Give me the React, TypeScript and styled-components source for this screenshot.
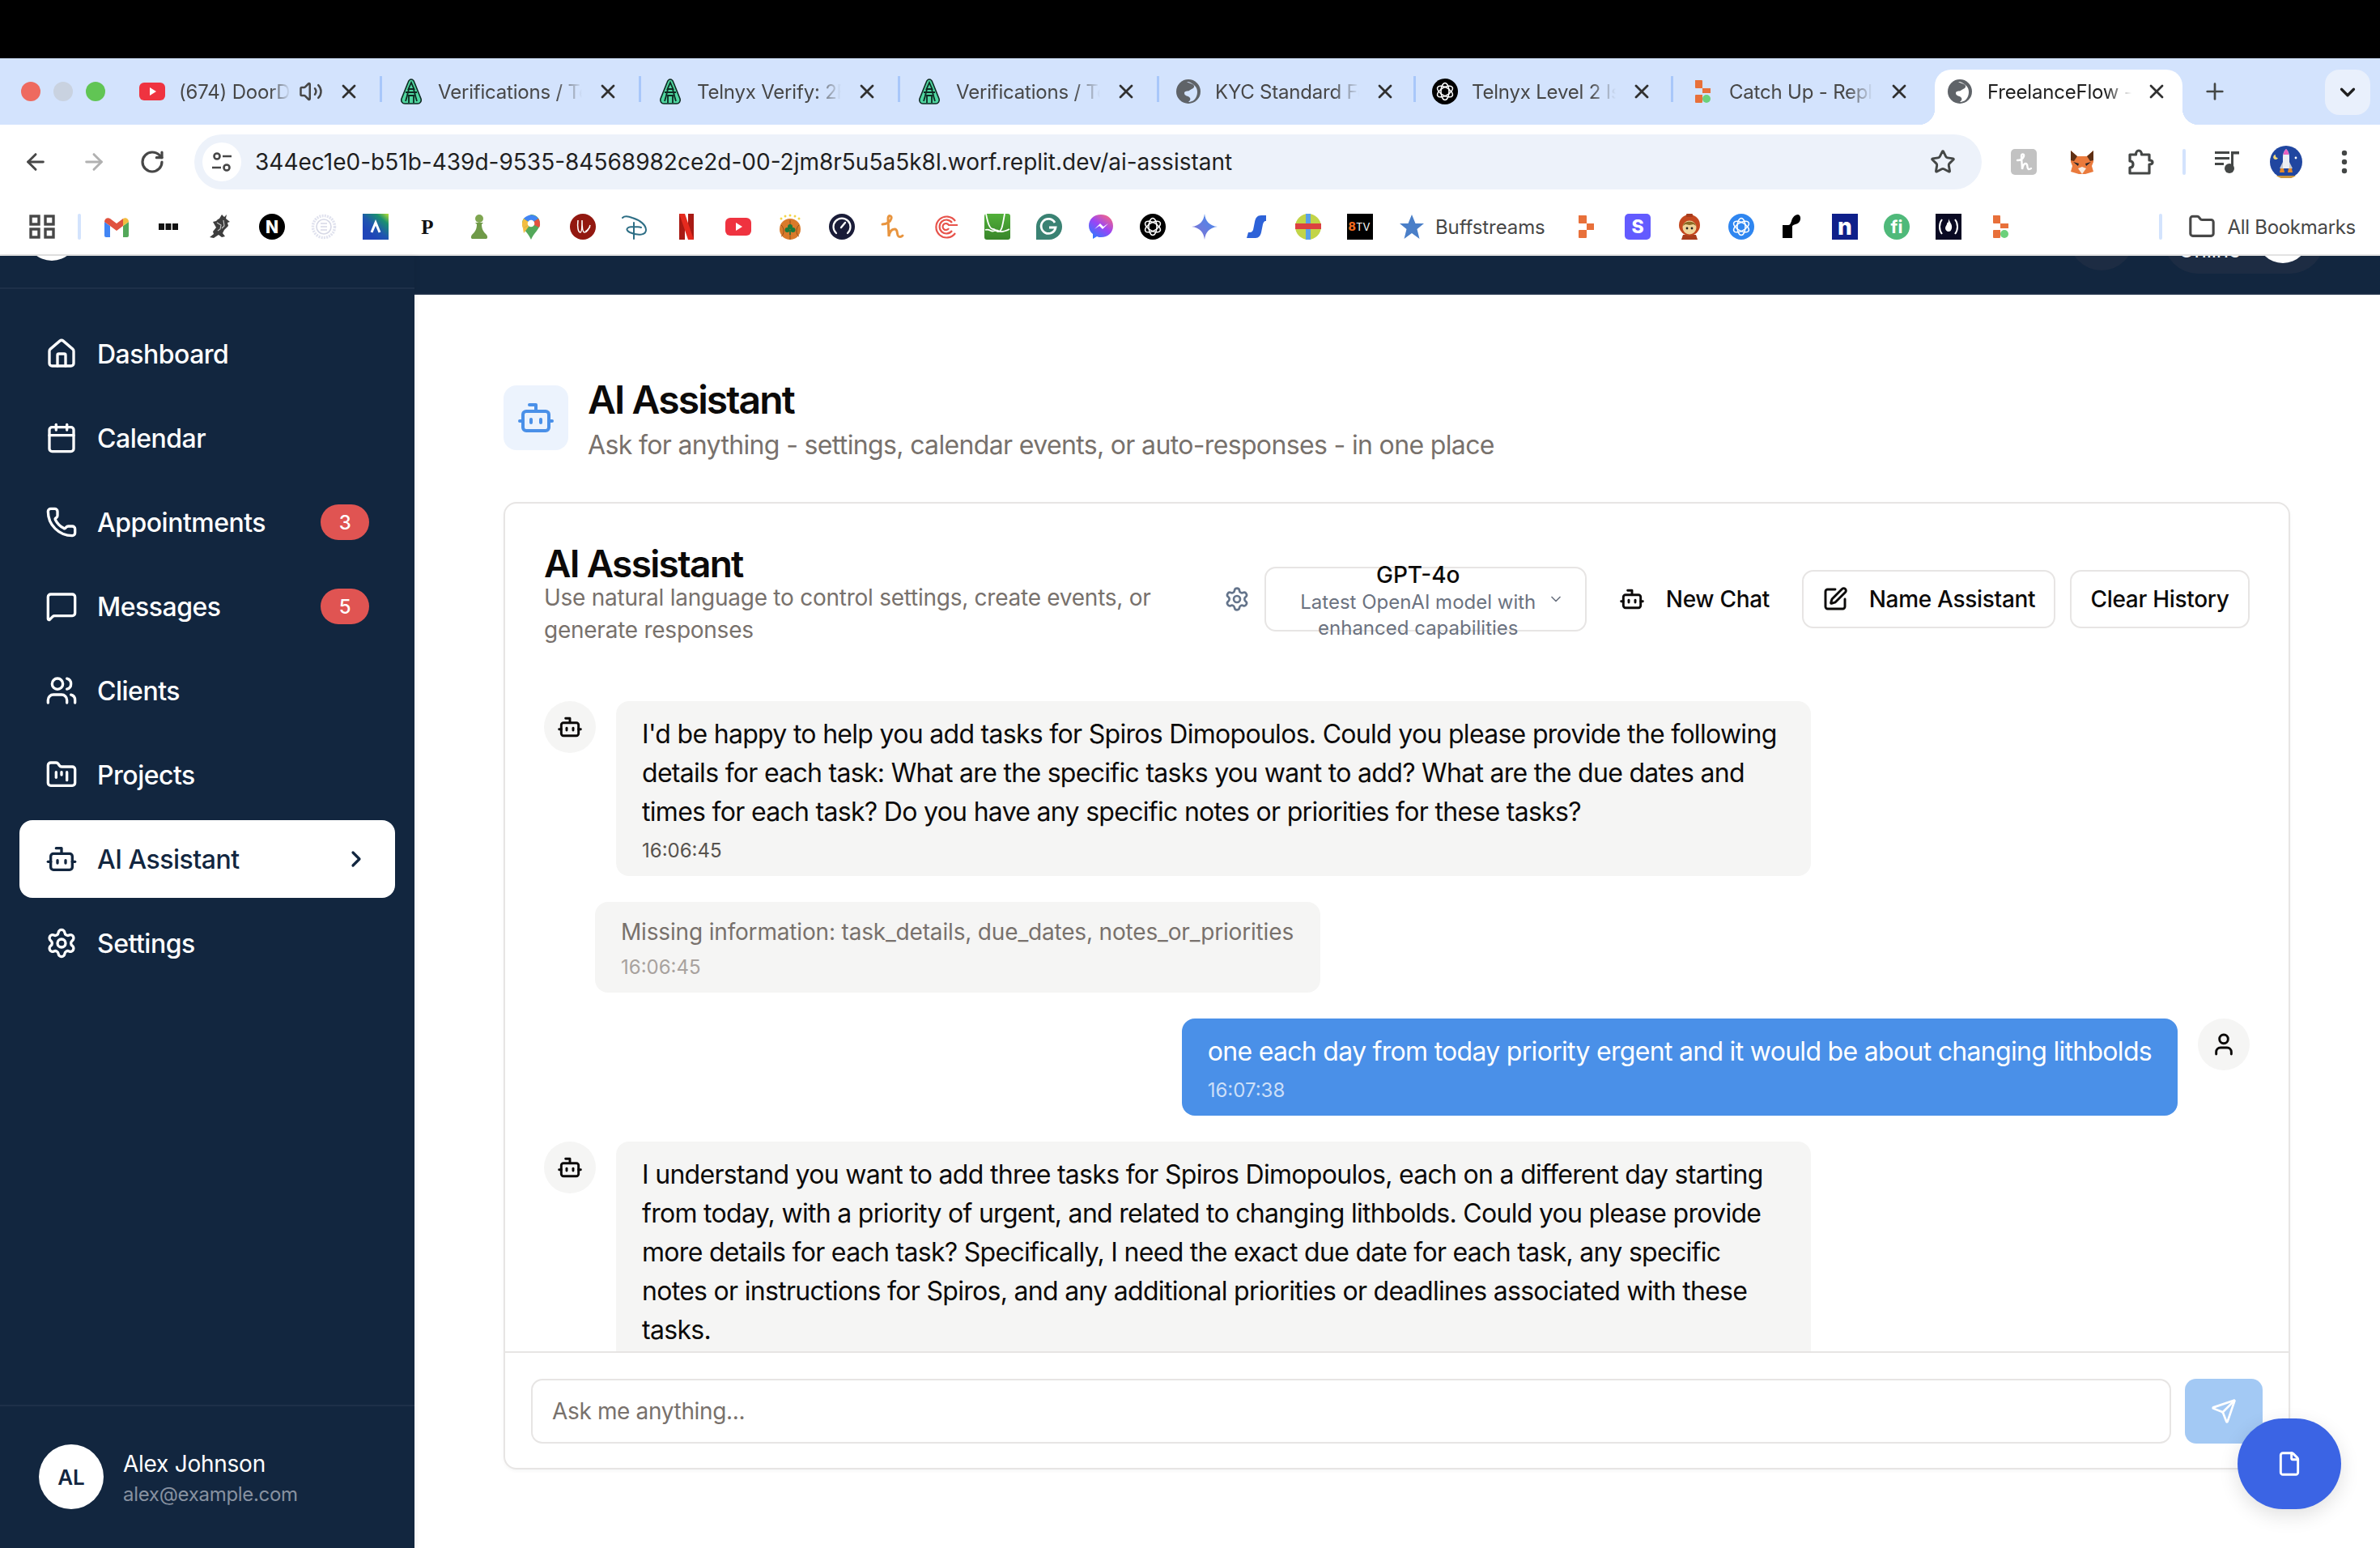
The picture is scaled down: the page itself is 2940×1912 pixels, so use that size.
import React from "react";
import styled, { createGlobalStyle } from "styled-components";
import {
  House, Calendar, Phone, MessageSquare, Users, FolderKanban, Bot, ChevronRight, Settings,
  SquarePen, Send, File, User, Star, ArrowLeft, ArrowRight, RotateCw, Plus, X,
  ChevronDown, Volume2, Folder,
} from "lucide-react";

const Global = createGlobalStyle`
  html, body { margin: 0; padding: 0; background: #fff; }
  body { font-family: Inter, "Liberation Sans", sans-serif; }
  * { box-sizing: border-box; }
`;

const Page = styled.div`
  width: 2940px; height: 1912px; display: flex; flex-direction: column; overflow: hidden; background: #fff; position: relative;
`;
const BlackBar = styled.div`height: 72px; background: #000; flex: none;`;
const TabStrip = styled.div`height: 82px; flex: none; background: #d3e3fd; display: flex; align-items: flex-start; padding-top: 14px;`;
const Lights = styled.div`width: 150px; height: 54px; flex: none; display: flex; align-items: center; gap: 16px; padding-left: 26px;`;
const Light = styled.span<{ $c: string }>`width: 24px; height: 24px; border-radius: 50%; background: ${p => p.$c};`;
const Tab = styled.div<{ $w: number; $active?: boolean; $sep?: boolean }>`
  width: ${p => p.$w}px; height: ${p => (p.$active ? 68 : 54)}px; flex: none; position: relative;
  display: flex; align-items: flex-start; padding: ${p => (p.$active ? "0 0 0 15px" : "0 0 0 22px")};
  background: ${p => (p.$active ? "#fff" : "transparent")};
  border-radius: ${p => (p.$active ? "20px 20px 0 0" : "0")};
  color: ${p => (p.$active ? "#1f1f1f" : "#474747")};
  ${p => p.$sep && `&::after { content: ""; position: absolute; right: -2px; top: 8px; width: 3px; height: 32px; background: #a8c7fa; }`}
  ${p => p.$active && `
    &::before, & > i { content: ""; position: absolute; bottom: 0; width: 20px; height: 20px; }
    &::before { left: -20px; background: radial-gradient(circle at 0 0, #d3e3fd 20px, #fff 20.5px); }
    & > i { right: -20px; background: radial-gradient(circle at 100% 0, #d3e3fd 20px, #fff 20.5px); }
  `}
`;
const TabRow = styled.div`height: 54px; width: 100%; display: flex; align-items: center; position: relative;`;
const TabIcon = styled.span<{ $active?: boolean }>`width: 32px; height: 32px; flex: none; margin-right: ${p => (p.$active ? 18 : 17)}px; display: flex;`;
const TabTitle = styled.span<{ $w: number }>`
  font-size: 24px; letter-spacing: -0.2px; width: ${p => p.$w}px; white-space: nowrap; overflow: hidden; flex: none;
  -webkit-mask-image: linear-gradient(90deg, #000 82%, transparent 100%); mask-image: linear-gradient(90deg, #000 82%, transparent 100%);
`;
const TabClose = styled.span<{ $l: number }>`position: absolute; left: ${p => p.$l}px; top: 13px; display: flex; color: #303030;`;
const Speaker = styled.span`position: absolute; left: 197px; top: 12px; display: flex; color: #474747;`;
const NewTab = styled.span`width: 80px; height: 54px; flex: none; display: flex; align-items: center; justify-content: center; color: #444746;`;
const TabMenu = styled.span`width: 56px; height: 56px; border-radius: 18px; background: #e9f0fc; margin-left: 96px; flex: none; display: flex; align-items: center; justify-content: center; color: #1f1f1f;`;

const Toolbar = styled.div`height: 94px; flex: none; background: #fff; border-radius: 16px 16px 0 0; display: flex; align-items: flex-start; padding-top: 12px; color: #474747;`;
const NavBtns = styled.div`width: 240px; height: 68px; flex: none; display: flex; align-items: center; padding-left: 28px; gap: 40px;`;
const Omni = styled.div`width: 2208px; height: 68px; flex: none; border-radius: 34px; background: #edf2fa; display: flex; align-items: center; padding-left: 10px; position: relative;`;
const TuneBtn = styled.span`width: 48px; height: 48px; border-radius: 50%; background: #fff; display: flex; align-items: center; justify-content: center; margin-right: 17px;`;
const Url = styled.span`font-size: 28px; color: #1f1f1f; white-space: nowrap;`;
const StarBtn = styled.span`position: absolute; right: 32px; top: 18px; display: flex; color: #444746;`;
const ExtIcons = styled.div`flex: 1; height: 68px; display: flex; align-items: center; padding-left: 16px;`;
const ExtSlot = styled.span<{ $w: number }>`width: ${p => p.$w}px; flex: none; display: flex; justify-content: center; color: #444746;`;
const VSep = styled.span`width: 4px; height: 32px; border-radius: 2px; background: #d3e3fd; flex: none;`;
const ExtSep = styled(VSep)`margin-left: 16px;`;

const Bookmarks = styled.div`height: 66px; flex: none; background: #fff; display: flex; align-items: center; padding: 0 30px 2px 20px; position: relative;`;
const BmSlot = styled.span`width: 64px; height: 32px; flex: none; display: flex; justify-content: center;`;
const BmText = styled.span`font-size: 24px; letter-spacing: -0.3px; color: #474747; white-space: nowrap;`;
const BuffText = styled(BmText)`margin: 0 18px 0 -3px; letter-spacing: -0.1px;`;
const BmSep = styled(VSep)`margin: 0 12px;`;
const BmRight = styled.div`margin-left: auto; display: flex; align-items: center; color: #474747;`;
const FolderSlot = styled.span`display: flex; margin: 0 15px 0 32px;`;
const ChromeLine = styled.div`height: 2px; flex: none; background: #e3e3e3;`;

const Body = styled.div`flex: 1; display: flex; min-height: 0;`;
const Sidebar = styled.aside`width: 512px; flex: none; background: #12263f; display: flex; flex-direction: column; color: #fff; box-shadow: 2px 0 6px rgba(0,0,0,.06); position: relative; z-index: 1;`;
const SideTop = styled.div`height: 41px; flex: none; border-bottom: 2px solid #1e3049; overflow: hidden; padding-left: 32px;`;
const LogoCircle = styled.div`width: 64px; height: 64px; border-radius: 50%; background: #fff; margin-top: -58px;`;
const Nav = styled.nav`flex: 1; padding: 32px 24px 0; display: flex; flex-direction: column; gap: 8px;`;
const NavItem = styled.div<{ $active?: boolean }>`
  height: 96px; border-radius: 16px; display: flex; align-items: center; padding: 0 32px 0 32px; gap: 24px;
  font-size: 32px; font-weight: 500; letter-spacing: -0.5px; background: ${p => (p.$active ? "#fff" : "transparent")}; color: ${p => (p.$active ? "#12263f" : "#fff")};
`;
const NavLabel = styled.span`flex: 1;`;
const Badge = styled.span`width: 60px; height: 44px; border-radius: 22px; background: #e05452; color: #fff; font-size: 24px; font-weight: 500; display: flex; align-items: center; justify-content: center;`;
const UserBlock = styled.div`height: 177px; flex: none; border-top: 2px solid #1e3049; display: flex; align-items: flex-start; padding: 47px 48px 0; gap: 24px;`;
const UserAvatar = styled.div`width: 80px; height: 80px; border-radius: 50%; background: #fff; color: #12263f; font-size: 26px; font-weight: 600; display: flex; align-items: center; justify-content: center;`;
const UserText = styled.div`display: flex; flex-direction: column; padding-top: 4px;`;
const UserName = styled.div`font-size: 28px; font-weight: 400; letter-spacing: -0.25px; line-height: 40px; color: #fff;`;
const UserMail = styled.div`font-size: 24px; letter-spacing: -0.3px; line-height: 36px; color: #8791a0;`;

const Main = styled.main`flex: 1; min-width: 0; display: flex; flex-direction: column;`;
const TopHeader = styled.header`height: 48px; flex: none; background: #12263f; border-bottom: 2px solid #1c2e47; overflow: hidden; display: flex; justify-content: flex-end; padding-right: 69px; gap: 37px; align-items: flex-start;`;
const HeaderCircle = styled.div`width: 80px; height: 80px; border-radius: 50%; background: #1d2c43; margin-top: -62px;`;
const StatusPill = styled.div`width: 198px; height: 84px; border-radius: 42px; background: #1d2c43; margin-top: -62px; display: flex; align-items: center; padding-left: 18px; color: #fff; font-size: 26px; letter-spacing: -0.3px; position: relative;`;
const StatusText = styled.span`margin-top: 24px;`;
const StatusDot = styled.span`width: 64px; height: 64px; border-radius: 50%; background: #fff; position: absolute; left: 115px; top: 7px;`;

const Content = styled.div`flex: 1; padding: 112px 111px 0 110px; min-height: 0; display: flex; flex-direction: column;`;
const PageHead = styled.div`display: flex; gap: 24px; height: 80px; margin-bottom: 64px;`;
const IconBox = styled.div`width: 80px; height: 80px; border-radius: 16px; background: #ecf3fd; color: #4a90e8; display: flex; align-items: center; justify-content: center; flex: none;`;
const PageTitle = styled.h1`margin: -10px 0 0; font-size: 48px; line-height: 56px; font-weight: 600; letter-spacing: -1.9px; color: #0c0a09;`;
const PageSub = styled.p`margin: 8px 0 0; font-size: 32px; line-height: 40px; letter-spacing: -0.65px; color: #78716c;`;

const Card = styled.section`height: 1195px; flex: none; border: 2px solid #e7e5e4; border-radius: 16px; background: #fff; display: flex; flex-direction: column; box-shadow: 0 2px 4px rgba(0,0,0,.04);`;
const CardHeader = styled.div`height: 244px; flex: none; padding: 48px 48px 0 48px; display: flex; align-items: flex-start;`;
const TitleBlock = styled.div`width: 780px; flex: none;`;
const CardTitle = styled.h2`margin: 2px 0 -2px; font-size: 46px; line-height: 48px; font-weight: 600; letter-spacing: -1.7px; color: #0c0a09;`;
const CardDesc = styled.p`margin: 0; font-size: 28px; line-height: 40px; letter-spacing: -0.25px; color: #78716c;`;
const Controls = styled.div`flex: 1; margin-top: 30px; display: flex; align-items: center; justify-content: flex-end;`;
const GearBtn = styled.span`display: flex; color: #64748b; margin-right: 18px;`;
const ModelSelect = styled.div`width: 398px; height: 80px; border: 2px solid #e7e5e4; border-radius: 14px; display: flex; align-items: center; position: relative; flex: none;`;
const ModelText = styled.div`width: 376px; text-align: center; margin-top: 4px;`;
const ModelName = styled.div`font-size: 28px; line-height: 36px; font-weight: 500; color: #0c0a09;`;
const ModelSub = styled.div`padding: 0 20px; font-size: 24px; line-height: 32px; color: #6b7280;`;
const ModelChevron = styled.span`display: flex; color: #6b7280; position: absolute; right: 26px; top: 28px;`;
const GhostBtn = styled.div`height: 72px; margin-left: 16px; padding: 0 24px; display: flex; align-items: center; gap: 26px; font-size: 28px; font-weight: 500; letter-spacing: -0.3px; color: #0c0a09; flex: none;`;
const OutlineBtn = styled(GhostBtn)<{ $w: number }>`width: ${p => p.$w}px; justify-content: center; border: 2px solid #e7e5e4; border-radius: 14px; margin-left: 18px; padding: 0;`;
const NameBtn = styled(OutlineBtn)`margin-left: 16px;`;

const Messages = styled.div`flex: 1; min-height: 0; overflow: hidden; padding: 0 48px; display: flex; flex-direction: column; gap: 32px;`;
const MsgRow = styled.div<{ $user?: boolean }>`display: flex; gap: 25px; flex: none; justify-content: ${p => (p.$user ? "flex-end" : "flex-start")};`;
const AvatarDot = styled.div`width: 64px; height: 64px; border-radius: 50%; background: #f5f5f4; color: #0c0a09; display: flex; align-items: center; justify-content: center; flex: none;`;
const Bubble = styled.div<{ $user?: boolean }>`
  max-width: 1476px; padding: 17px 32px 13px; border-radius: 16px; font-size: 32px; line-height: 48px; letter-spacing: -0.7px;
  background: ${p => (p.$user ? "#4a90e8" : "#f5f5f4")}; color: ${p => (p.$user ? "#fff" : "#0c0a09")};
`;
const Stamp = styled.div<{ $light?: boolean; $muted?: boolean }>`margin-top: 6px; font-size: 24px; line-height: 36px; letter-spacing: 0; color: ${p => (p.$light ? "rgba(255,255,255,.72)" : p.$muted ? "#a8a29e" : "#57534e")};`;
const NoteBubble = styled.div`margin-left: 63px; width: 896px; padding: 17px 32px 13px; border-radius: 16px; background: #f5f5f4; font-size: 28px; line-height: 40px; letter-spacing: -0.17px; white-space: nowrap; color: #78716c; flex: none;`;

const InputBar = styled.div`height: 144px; flex: none; border-top: 2px solid #e7e5e4; padding: 32px 32px 0; display: flex; gap: 17px;`;
const ChatInput = styled.div`flex: 1; height: 80px; border: 2px solid #e7e5e4; border-radius: 14px; padding: 0 24px; display: flex; align-items: center; font-size: 28px; letter-spacing: -0.35px; color: #78716c;`;
const SendBtn = styled.div`width: 96px; height: 80px; border-radius: 14px; background: #a3c9f4; color: #fff; display: flex; align-items: center; justify-content: center; flex: none;`;
const Fab = styled.div`position: absolute; left: 2764px; top: 1752px; width: 128px; height: 112px; border-radius: 56px; background: #3b64e4; color: #fff; display: flex; align-items: center; justify-content: center; box-shadow: 0 8px 24px rgba(0,0,0,.12);`;

const Fav = styled.svg`width: 32px; height: 32px; display: block; flex: none;`;
const G = { sans: "Inter, sans-serif", serif: "Liberation Serif, serif" };

const Flower: React.FC<{ bg: string }> = ({ bg }) => (
  <Fav viewBox="0 0 32 32">
    <circle cx="16" cy="16" r="16" fill={bg} />
    <g fill="none" stroke="#fff" strokeWidth="1.5">
      <ellipse cx="16" cy="16" rx="5" ry="10.5" />
      <ellipse cx="16" cy="16" rx="5" ry="10.5" transform="rotate(60 16 16)" />
      <ellipse cx="16" cy="16" rx="5" ry="10.5" transform="rotate(120 16 16)" />
    </g>
  </Fav>
);
const Telnyx = () => (
  <Fav viewBox="0 0 32 32">
    <path d="M16 1c2 0 3 1 4 4l8 20c1 3-1 6-4 6H8c-3 0-5-3-4-6l8-20c1-3 2-4 4-4z" fill="#4fd6a0" stroke="#0e2a22" strokeWidth="1.6" />
    <path d="M16 5l-3.500 8h7zM9 17h14M9 28c2-6 3-11 4-15M23 28c-2-6-3-11-4-15M13 30V21h6v9" fill="none" stroke="#0e2a22" strokeWidth="1.800" />
  </Fav>
);

const FavIcon: React.FC<{ k: string }> = ({ k }) => {
  switch (k) {
    case "yt": return <Fav viewBox="0 0 32 32"><rect x="0" y="5" width="32" height="22" rx="6" fill="#ef3340" /><path d="M13 11l8 5-8 5z" fill="#fff" /></Fav>;
    case "telnyx": return <Telnyx />;
    case "globe": return <Fav viewBox="0 0 32 32"><circle cx="16" cy="16" r="15" fill="#5f6368" /><path d="M14 4c3 2 8 2 9 5 1 3-4 4-6 6-2 1-6 0-6 3 0 4 5 3 7 6 1 2 0 3-2 5 4 0 8-2 10-7 2-5 1-10-2-13-3-3-6-5-10-5z" fill="#d3e3fd" /></Fav>;
    case "globeW": return <Fav viewBox="0 0 32 32"><circle cx="16" cy="16" r="15" fill="#5f6368" /><path d="M14 4c3 2 8 2 9 5 1 3-4 4-6 6-2 1-6 0-6 3 0 4 5 3 7 6 1 2 0 3-2 5 4 0 8-2 10-7 2-5 1-10-2-13-3-3-6-5-10-5z" fill="#fff" /></Fav>;
    case "openai": return <Flower bg="#000" />;
    case "openaiB": return <Flower bg="#2f86f0" />;
    case "replit": return <Fav viewBox="0 0 32 32"><path d="M7 2h9a1 1 0 011 1v9H8a1 1 0 01-1-1zM17 12h9v8h-9zM7 21a1 1 0 011-1h9v9a1 1 0 01-1 1H8a1 1 0 01-1-1z" fill="#e8703a" /></Fav>;
    case "replitG": return <Fav viewBox="0 0 32 32"><path d="M7 2h8a1 1 0 011 1v9H8a1 1 0 01-1-1zM16 12h10v6H16zM7 21a1 1 0 011-1h8v9a1 1 0 01-1 1H8a1 1 0 01-1-1z" fill="#e8703a" /><circle cx="21" cy="25" r="5" fill="#6cd07b" /></Fav>;
    case "gmail": return <Fav viewBox="0 0 32 32"><path d="M1 10v17a2 2 0 002 2h5V15z" fill="#4285f4" /><path d="M31 10v17a2 2 0 01-2 2h-5V15z" fill="#53a85a" /><path d="M1 10c0-4 4-6 7-4l8 6 8-6v9l-8 6-8-6-7-5z" fill="#e0523f" /><path d="M24 6c3-2 7 0 7 4l-7 5z" fill="#f3bd40" /></Fav>;
    case "dots": return <Fav viewBox="0 0 32 32"><path d="M4 12h7v8H4zM12.500 12h7v8h-7zM21 12h7v8h-7z" fill="#111" /></Fav>;
    case "griffin": return <Fav viewBox="0 0 32 32"><path d="M18 1l3 3 3-3-1 5 5 4-3 1 1 4-5 5-2 4 3 4-4 1-4-3-6 4-5-1 5-4-1-3 4-5-4-7 4-1 2-2 2-1z" fill="#3d3d3d" /><path d="M12 11l5 3-1 5-3 2M20 8l1 7-3 3" fill="none" stroke="#c5c5c5" strokeWidth="1.200" /></Fav>;
    case "n": return <Fav viewBox="0 0 32 32"><circle cx="16" cy="16" r="16" fill="#000" /><text x="16" y="23.500" textAnchor="middle" fill="#fff" fontSize="21" fontWeight="800" fontFamily={G.sans}>N</text></Fav>;
    case "pale": return <Fav viewBox="0 0 32 32"><circle cx="16" cy="16" r="13.500" fill="#fff" stroke="#e0e2ee" strokeWidth="3.500" strokeDasharray="2 1.200" /><circle cx="16" cy="16" r="9" fill="none" stroke="#d6d8e6" strokeWidth="1.600" /><path d="M12 12h8M12 16h8M12 20h8" stroke="#d6d8e6" strokeWidth="1.400" /></Fav>;
    case "lambda": return <Fav viewBox="0 0 32 32"><defs><linearGradient id="lg1" x1="1" y1="0" x2="0.300" y2="0.800"><stop offset="0" stopColor="#b8e030" /><stop offset=".3" stopColor="#1a9070" /><stop offset=".7" stopColor="#1f55b0" /><stop offset="1" stopColor="#1f45b8" /></linearGradient></defs><rect width="32" height="32" fill="url(#lg1)" /><path d="M11 23l5-12 5 12" fill="none" stroke="#fff" strokeWidth="3" /></Fav>;
    case "p": return <Fav viewBox="0 0 32 32"><text x="16" y="25" textAnchor="middle" fill="#111" fontSize="25" fontWeight="700" fontFamily={G.serif}>P</text></Fav>;
    case "pawn": return <Fav viewBox="0 0 32 32"><circle cx="16" cy="6" r="5" fill="#7fa650" /><path d="M11 11h10l-2 2c0 6 2 9 6 13 2 3 1 5-1 5H8c-2 0-3-2-1-5 4-4 6-7 6-13z" fill="#6f9a48" /></Fav>;
    case "maps": return <Fav viewBox="0 0 32 32"><path d="M16 1c6 0 11 4 11 11 0 7-8 12-11 20-3-8-11-13-11-20C5 9 6 7 7 6z" fill="#53a85a" /><path d="M7 6l9 6-10 6c-1-2-1-4-1-6 0-2 1-4 2-6z" fill="#f3bd40" /><path d="M7 6c5-6 14-6 18 0l-9 6z" fill="#4285f4" /><path d="M25 6c2 3 3 8 1 11L16 12z" fill="#e0523f" /><path d="M6 18l10-6-9 12z" fill="#f3bd40" /><circle cx="16" cy="12" r="4.300" fill="#fff" /></Fav>;
    case "wred": return <Fav viewBox="0 0 32 32"><circle cx="16" cy="16" r="16" fill="#921810" /><path d="M10 8c-1 8 0 15 3 15 2 0 2-9 2-15 0 6 0 15 3 15 3 0 6-5 7-9M19 22c3-1 5-5 6-6" fill="none" stroke="#fff" strokeWidth="1.500" /></Fav>;
    case "disney": return <Fav viewBox="0 0 32 32"><path d="M1 5c2-2 7-2 12 0 10 3 17 9 17 15 0 6-9 8-20 3-6-3-4-7 4-7 5 0 7 0 10 1M15 11v20" fill="none" stroke="#2d6e85" strokeWidth="2" strokeLinecap="round" /></Fav>;
    case "netflix": return <Fav viewBox="0 0 32 32"><path d="M7 0h7v32l-7 0z" fill="#a81a14" /><path d="M18 0h7v32h-7z" fill="#a81a14" /><path d="M7 0h7l11 32h-7z" fill="#e52a1e" /></Fav>;
    case "ball": return <Fav viewBox="0 0 32 32"><circle cx="16" cy="19" r="13" fill="#d97a2b" /><path d="M16 8v24M5 14c4 3 4 12 0 14M27 14c-4 3-4 12 0 14" fill="none" stroke="#8a4a18" strokeWidth=".9" /><circle cx="16" cy="16" r="3" fill="#1a7a3c" /><circle cx="12.500" cy="20" r="3" fill="#1a7a3c" /><circle cx="19.500" cy="20" r="3" fill="#1a7a3c" /><path d="M16 20v6" stroke="#1a7a3c" strokeWidth="1.500" /><g fill="#f3d547"><circle cx="16" cy="2" r="1.500" /><circle cx="10" cy="3" r="1.500" /><circle cx="22" cy="3" r="1.500" /><circle cx="5" cy="6" r="1.500" /><circle cx="27" cy="6" r="1.500" /></g></Fav>;
    case "gauge": return <Fav viewBox="0 0 32 32"><circle cx="16" cy="16" r="16" fill="#1a1c38" /><path d="M9 24a10.500 10.500 0 1114 0" fill="none" stroke="#fff" strokeWidth="2.200" strokeLinecap="round" /><path d="M15 17l5-6" stroke="#fff" strokeWidth="2.400" strokeLinecap="round" /></Fav>;
    case "hOrange": return <Fav viewBox="0 0 32 32"><path d="M2 13c5 0 10-3 11-7 1-4-4-5-4 0l1 22c1-6 3-9 7-9 5 0 2 7 5 9 2 1 4 0 5-1" fill="none" stroke="#e8943e" strokeWidth="3" strokeLinecap="round" /></Fav>;
    case "hGrey": return <Fav viewBox="0 0 32 32"><rect width="32" height="32" rx="5" fill="#c2c2c2" /><path d="M8 14c4 0 7-2 8-5 1-3-3-4-3 0l1 16c1-5 2-7 4-7 4 0 1 6 4 7 1 0 2 0 3-1" fill="none" stroke="#fff" strokeWidth="2.400" strokeLinecap="round" /></Fav>;
    case "spiral": return <Fav viewBox="0 0 32 32"><path d="M28 24A13 13 0 1128 9M24 21A8.500 8.500 0 1124 11M20 18a4 4 0 110-4H31" fill="none" stroke="#e7534b" strokeWidth="2.200" /></Fav>;
    case "chart": return <Fav viewBox="0 0 32 32"><defs><linearGradient id="lg4" x1="0" y1="0" x2="0" y2="1"><stop offset="0" stopColor="#52b03a" /><stop offset="1" stopColor="#38852a" /></linearGradient></defs><rect width="32" height="32" rx="3" fill="url(#lg4)" /><path d="M2 0c2 10 4 19 9 19 3 0 3 3 6 3 4 0 5-4 8-22M1 20c3-1 5 0 7 1 3 2 6-2 9 0 3 2 8 1 14-2" fill="none" stroke="#fff" strokeWidth="1.800" /></Fav>;
    case "g": return <Fav viewBox="0 0 32 32"><path d="M16 0a16 16 0 010 32H0V16A16 16 0 0116 0z" fill="#3a8273" /><path d="M23 11a9 9 0 10 1 6h-8" fill="none" stroke="#fff" strokeWidth="2.800" /></Fav>;
    case "messenger": return <Fav viewBox="0 0 32 32"><defs><linearGradient id="lg2" x1="0.200" y1="1" x2="0.900" y2="0"><stop offset="0" stopColor="#2a7cff" /><stop offset=".5" stopColor="#9a45f5" /><stop offset="1" stopColor="#ff6a7a" /></linearGradient></defs><path d="M16 1C7 1 1 7 1 15c0 4 2 8 5 10v6l5-3c2 1 3 1 5 1 9 0 15-6 15-14S25 1 16 1z" fill="url(#lg2)" /><path d="M8 19l7-7 4 4 6-4-7 7-4-4z" fill="#fff" /></Fav>;
    case "gemini": return <Fav viewBox="0 0 32 32"><defs><linearGradient id="lg3" x1="0" y1="1" x2="1" y2="0"><stop offset="0" stopColor="#8a70d0" /><stop offset="1" stopColor="#3f8df0" /></linearGradient></defs><path d="M16 0c1 9 6 15 16 16-10 1-15 7-16 16-1-9-6-15-16-16C10 15 15 9 16 0z" fill="url(#lg3)" /></Fav>;
    case "scurve": return <Fav viewBox="0 0 32 32"><path d="M28 2H22c-5 0-7 3-8 8l-2 10c-1 2-2 3-4 3H6l-2 7h11c4 0 6-3 7-7l2-10c1-3 2-4 3-4h1z" fill="#2d62d8" /></Fav>;
    case "cross": return <Fav viewBox="0 0 32 32"><circle cx="16" cy="16" r="16" fill="#c2d448" /><rect x="13" width="6" height="32" fill="#5aa0e8" /><rect y="12" width="32" height="7" fill="#dc4040" /></Fav>;
    case "tv": return <Fav viewBox="0 0 32 32"><rect width="32" height="32" fill="#000" /><text x="1.500" y="21" fill="#ef6a1f" fontSize="14" fontWeight="800" fontFamily={G.sans}>8</text><text x="11" y="21" fill="#fff" fontSize="13" fontFamily={G.sans}>TV</text></Fav>;
    case "star": return <Fav viewBox="0 0 32 32"><path d="M16 1l4.500 11H31l-8.500 7 3 12L16 24l-9.500 7 3-12L1 12h10.500z" fill="#4a7fc8" /></Fav>;
    case "stripe": return <Fav viewBox="0 0 32 32"><rect width="32" height="32" rx="5" fill="#635bff" /><text x="16" y="24" textAnchor="middle" fill="#fff" fontSize="23" fontWeight="800" fontFamily={G.sans}>S</text></Fav>;
    case "astro": return <Fav viewBox="0 0 32 32"><path d="M6 32l2-6h16l2 6z" fill="#a83c1c" /><circle cx="16" cy="14" r="13" fill="#c4481f" /><rect x="12" y="0" width="8" height="4" rx="1" fill="#a83c1c" /><circle cx="16" cy="17" r="8.500" fill="#f0d49a" /><path d="M8 15c1-7 15-7 16 0l-3-2-5 1-5-1z" fill="#8a6a24" /><circle cx="13" cy="18" r="1.400" fill="#222" /><circle cx="19" cy="18" r="1.400" fill="#222" /></Fav>;
    case "blackshape": return <Fav viewBox="0 0 32 32"><path d="M3 14h7c2 0 3-2 4-5 1-4 4-8 8-8 4 1 4 7 1 10-2 2-6 2-8 4v15H3z" fill="#000" /></Fav>;
    case "navy": return <Fav viewBox="0 0 32 32"><rect width="32" height="32" fill="#0e1f8a" /><text x="16" y="26" textAnchor="middle" fill="#fff" fontSize="28" fontWeight="800" fontFamily={G.sans}>n</text></Fav>;
    case "fi": return <Fav viewBox="0 0 32 32"><circle cx="16" cy="16" r="16" fill="#4fb97a" /><text x="16" y="24" textAnchor="middle" fill="#fff" fontSize="22" fontWeight="700" fontFamily={G.sans}>fi</text></Fav>;
    case "fcc": return <Fav viewBox="0 0 32 32"><rect width="32" height="32" fill="#0a0a23" /><path d="M8 7c-4 5-4 13 0 18M24 7c4 5 4 13 0 18" fill="none" stroke="#fff" strokeWidth="2" /><path d="M16 6c1 4 5 7 4 12-1 3-2 4-4 4s-4-2-4-4c0-3 3-5 2-7 2 1 2-2 2-5z" fill="#fff" /></Fav>;
    case "fox": return <Fav viewBox="0 0 32 32"><path d="M2 2l8 7h12l8-7 0 14-2 5 2 7-10 3h-8L2 28l2-7-2-5z" fill="#ea7a3c" /><path d="M2 2l8 7-4 6-4-1zM30 2l-8 7 4 6 4-1z" fill="#5e2f14" /><path d="M11 24l5 7 5-7-5-2z" fill="#f7ece2" /><path d="M5 16l7 2-1 3zM27 16l-7 2 1 3z" fill="#27262a" /></Fav>;
    default: return null;
  }
};

const Rocket = () => (
  <svg width="40" height="40" viewBox="0 0 40 40">
    <circle cx="20" cy="20" r="20" fill="#2046a0" />
    <path d="M20 4c3 3 4 6 4 10v14h-8V14c0-4 1-7 4-10z" fill="#eceef2" />
    <path d="M20 4c2 2 3 4 3.500 7h-7C17 8 18 6 20 4z" fill="#e85fc0" />
    <path d="M16 20l-4 8h4zM24 20l4 8h-4z" fill="#c6c9d2" />
    <path d="M13 28h4l1 5h-6zM23 28h4l1 5h-6z" fill="#e58a2a" />
    <path d="M8 37h24a20 20 0 01-24 0z" fill="#c9953e" />
    <path d="M7 11a3 3 0 103 4 3 3 0 01-3-4z" fill="#f3d97a" />
    <circle cx="32" cy="15" r="1.400" fill="#fff" />
  </svg>
);
const ExtPuzzle = () => (
  <svg width="34" height="36" viewBox="0 0 34 36" fill="none" stroke="#444746" strokeWidth="3.200" strokeLinejoin="round">
    <path d="M4 9h7.500c0-3 1.500-5 3.500-5s3.500 2 3.500 5H28v7c3 0 4 1 4 2.500S31 21 28 21v11H4v-7c3 0 4-1.500 4-4s-1-4-4-4z" />
  </svg>
);
const QueueMusic = () => (
  <svg width="32" height="30" viewBox="0 0 32 30" fill="#444746">
    <rect x="0" y="2" width="18" height="3" /><rect x="0" y="9" width="18" height="3" /><rect x="0" y="16" width="11" height="3" />
    <rect x="20" y="2" width="3" height="21" /><rect x="20" y="2" width="10" height="3.500" /><circle cx="18" cy="23" r="6" />
  </svg>
);
const Kebab = () => (
  <svg width="8" height="32" viewBox="0 0 8 32" fill="#444746"><circle cx="4" cy="5" r="3.200" /><circle cx="4" cy="16" r="3.200" /><circle cx="4" cy="27" r="3.200" /></svg>
);
const Tune = () => (
  <svg width="28" height="28" viewBox="0 0 28 28" fill="none" stroke="#474747" strokeWidth="2.600"><circle cx="8" cy="7" r="3.500" /><path d="M15 7h11M2 21h11" /><circle cx="20" cy="21" r="3.500" /></svg>
);
const Apps = () => (
  <svg width="32" height="32" viewBox="0 0 32 32" fill="none" stroke="#474747" strokeWidth="3.400"><rect x="2" y="3" width="10" height="10" /><rect x="20" y="3" width="10" height="10" /><rect x="2" y="19" width="10" height="10" /><rect x="20" y="19" width="10" height="10" /></svg>
);

const tabs = [
  { w: 320, ic: "yt", t: "(674) DoorDash", tw: 138, sp: true },
  { w: 320, ic: "telnyx", t: "Verifications / Telnyx", tw: 178 },
  { w: 320, ic: "telnyx", t: "Telnyx Verify: 2FA", tw: 178 },
  { w: 320, ic: "telnyx", t: "Verifications / Telnyx", tw: 178 },
  { w: 317, ic: "globe", t: "KYC Standard Form", tw: 178 },
  { w: 318, ic: "openai", t: "Telnyx Level 2 Issue", tw: 178 },
  { w: 325, ic: "replitG", t: "Catch Up - Replit", tw: 178 },
];
const marks = ["gmail","dots","griffin","n","pale","lambda","p","pawn","maps","wred","disney","netflix","yt","ball","gauge","hOrange","spiral","chart","g","messenger","openai","gemini","scurve","cross","tv"];
const marks2 = ["replit","stripe","astro","openaiB","blackshape","navy","fi","fcc","replitG"];
const nav: { l: string; I: React.ComponentType<any>; b?: string; a?: boolean }[] = [
  { l: "Dashboard", I: House }, { l: "Calendar", I: Calendar }, { l: "Appointments", I: Phone, b: "3" },
  { l: "Messages", I: MessageSquare, b: "5" }, { l: "Clients", I: Users }, { l: "Projects", I: FolderKanban },
  { l: "AI Assistant", I: Bot, a: true }, { l: "Settings", I: Settings },
];

export default function App() {
  return (
    <Page>
      <Global />
      <BlackBar />
      <TabStrip>
        <Lights><Light $c="#ee6a5f" /><Light $c="#c9d2e0" /><Light $c="#61c554" /></Lights>
        {tabs.map((t, i) => (
          <Tab key={i} $w={t.w} $sep={i < tabs.length - 1}>
            <TabRow>
              <TabIcon><FavIcon k={t.ic} /></TabIcon>
              <TabTitle $w={t.tw}>{t.t}</TabTitle>
              {t.sp && <Speaker><Volume2 size={30} /></Speaker>}
              <TabClose $l={245}><X size={28} strokeWidth={2.4} /></TabClose>
            </TabRow>
          </Tab>
        ))}
        <Tab $w={306} $active>
          <i />
          <TabRow>
            <TabIcon $active><FavIcon k="globeW" /></TabIcon>
            <TabTitle $w={178}>FreelanceFlow - AI</TabTitle>
            <TabClose $l={245}><X size={28} strokeWidth={2.4} /></TabClose>
          </TabRow>
        </Tab>
        <NewTab><Plus size={32} strokeWidth={2} /></NewTab>
        <TabMenu><ChevronDown size={30} strokeWidth={2.6} /></TabMenu>
      </TabStrip>
      <Toolbar>
        <NavBtns>
          <ArrowLeft size={32} strokeWidth={2.2} />
          <ArrowRight size={32} strokeWidth={2.2} color="#b1b1b1" />
          <RotateCw size={32} strokeWidth={2.4} />
        </NavBtns>
        <Omni>
          <TuneBtn><Tune /></TuneBtn>
          <Url>344ec1e0-b51b-439d-9535-84568982ce2d-00-2jm8r5u5a5k8l.worf.replit.dev/ai-assistant</Url>
          <StarBtn><Star size={32} strokeWidth={2.2} /></StarBtn>
        </Omni>
        <ExtIcons>
          <ExtSlot $w={72}><FavIcon k="hGrey" /></ExtSlot>
          <ExtSlot $w={72}><FavIcon k="fox" /></ExtSlot>
          <ExtSlot $w={72}><ExtPuzzle /></ExtSlot>
          <ExtSep />
          <ExtSlot $w={104}><QueueMusic /></ExtSlot>
          <ExtSlot $w={40}><Rocket /></ExtSlot>
          <ExtSlot $w={104}><Kebab /></ExtSlot>
        </ExtIcons>
      </Toolbar>
      <Bookmarks>
        <BmSlot><Apps /></BmSlot>
        <BmSep />
        {marks.map((m, i) => <BmSlot key={i}><FavIcon k={m} /></BmSlot>)}
        <BmSlot><FavIcon k="star" /></BmSlot>
        <BuffText>Buffstreams</BuffText>
        {marks2.map((m, i) => <BmSlot key={i}><FavIcon k={m} /></BmSlot>)}
        <BmRight>
          <VSep />
          <FolderSlot><Folder size={34} strokeWidth={2.2} /></FolderSlot>
          <BmText>All Bookmarks</BmText>
        </BmRight>
      </Bookmarks>
      <ChromeLine />
      <Body>
        <Sidebar>
          <SideTop><LogoCircle /></SideTop>
          <Nav>
            {nav.map(n => (
              <NavItem key={n.l} $active={n.a}>
                <n.I size={40} strokeWidth={2} />
                <NavLabel>{n.l}</NavLabel>
                {n.b && <Badge>{n.b}</Badge>}
                {n.a && <ChevronRight size={32} strokeWidth={2.4} />}
              </NavItem>
            ))}
          </Nav>
          <UserBlock>
            <UserAvatar>AL</UserAvatar>
            <UserText>
              <UserName>Alex Johnson</UserName>
              <UserMail>alex@example.com</UserMail>
            </UserText>
          </UserBlock>
        </Sidebar>
        <Main>
          <TopHeader>
            <HeaderCircle />
            <StatusPill><StatusText>Online</StatusText><StatusDot /></StatusPill>
          </TopHeader>
          <Content>
            <PageHead>
              <IconBox><Bot size={48} strokeWidth={2} /></IconBox>
              <div>
                <PageTitle>AI Assistant</PageTitle>
                <PageSub>Ask for anything - settings, calendar events, or auto-responses - in one place</PageSub>
              </div>
            </PageHead>
            <Card>
              <CardHeader>
                <TitleBlock>
                  <CardTitle>AI Assistant</CardTitle>
                  <CardDesc>Use natural language to control settings, create events, or generate responses</CardDesc>
                </TitleBlock>
                <Controls>
                  <GearBtn><Settings size={32} strokeWidth={2} /></GearBtn>
                  <ModelSelect>
                    <ModelText>
                      <ModelName>GPT-4o</ModelName>
                      <ModelSub>Latest OpenAI model with enhanced capabilities</ModelSub>
                    </ModelText>
                    <ModelChevron><ChevronDown size={20} strokeWidth={2} /></ModelChevron>
                  </ModelSelect>
                  <GhostBtn><Bot size={32} strokeWidth={2.2} />New Chat</GhostBtn>
                  <NameBtn $w={313}><SquarePen size={32} strokeWidth={2.2} />Name Assistant</NameBtn>
                  <OutlineBtn $w={222}>Clear History</OutlineBtn>
                </Controls>
              </CardHeader>
              <Messages>
                <MsgRow>
                  <AvatarDot><Bot size={32} strokeWidth={2.2} /></AvatarDot>
                  <Bubble>
                    I'd be happy to help you add tasks for Spiros Dimopoulos. Could you please provide the following details for each task: What are the specific tasks you want to add? What are the due dates and times for each task? Do you have any specific notes or priorities for these tasks?
                    <Stamp>16:06:45</Stamp>
                  </Bubble>
                </MsgRow>
                <NoteBubble>
                  Missing information: task_details, due_dates, notes_or_priorities
                  <Stamp $muted>16:06:45</Stamp>
                </NoteBubble>
                <MsgRow $user>
                  <Bubble $user>
                    one each day from today priority ergent and it would be about changing lithbolds
                    <Stamp $light>16:07:38</Stamp>
                  </Bubble>
                  <AvatarDot><User size={32} strokeWidth={2.2} /></AvatarDot>
                </MsgRow>
                <MsgRow>
                  <AvatarDot><Bot size={32} strokeWidth={2.2} /></AvatarDot>
                  <Bubble>
                    I understand you want to add three tasks for Spiros Dimopoulos, each on a different day starting from today, with a priority of urgent, and related to changing lithbolds. Could you please provide more details for each task? Specifically, I need the exact due date for each task, any specific notes or instructions for Spiros, and any additional priorities or deadlines associated with these tasks.
                    <Stamp>16:08:02</Stamp>
                  </Bubble>
                </MsgRow>
              </Messages>
              <InputBar>
                <ChatInput>Ask me anything...</ChatInput>
                <SendBtn><Send size={32} strokeWidth={2} /></SendBtn>
              </InputBar>
            </Card>
          </Content>
        </Main>
      </Body>
      <Fab><File size={32} strokeWidth={2.2} /></Fab>
    </Page>
  );
}
